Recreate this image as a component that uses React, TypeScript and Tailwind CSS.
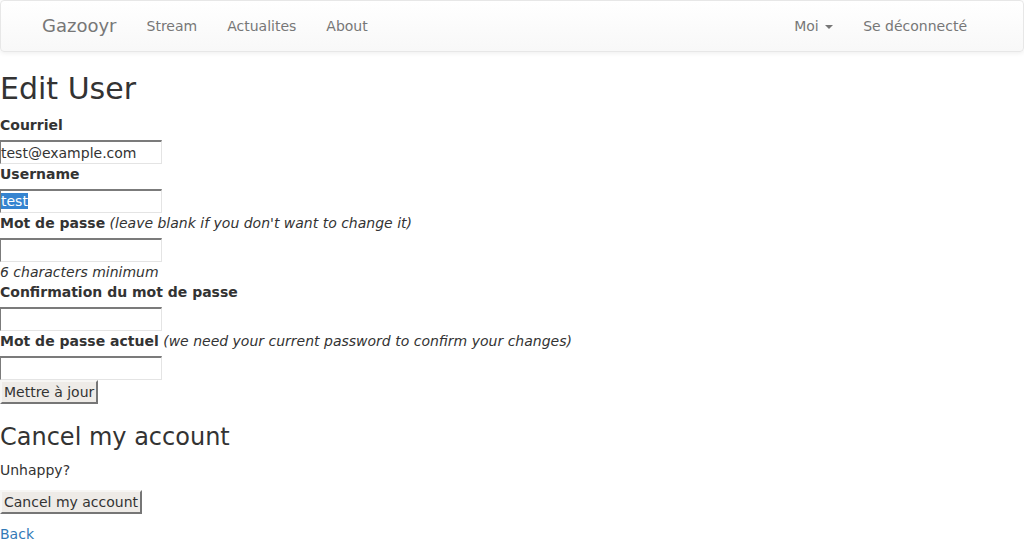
import React from 'react';

const field = 'w-[162px] h-[24px] border-t-2 border-l border-b border-r border-t-[#7b7b7b] border-l-[#7b7b7b] border-b-[#e4e4e4] border-r-[#e4e4e4] bg-white px-0 text-[14px] leading-[20px] text-[#333] outline-none';
const button = 'h-[24px] border-2 border-t-[#f7f6f4] border-l-[#f7f6f4] border-b-[#767676] border-r-[#767676] bg-[#eeebe7] px-[2px] text-[14px] leading-[18px] text-[#333]';

function Navbar() {
  const links = ['Stream', 'Actualites', 'About'];
  return (
    <nav className="h-[52px] mb-[20px] border border-[#e7e7e7] rounded-[4px] bg-gradient-to-b from-white to-[#f8f8f8] shadow-[0_1px_5px_rgba(0,0,0,0.075)]">
      <div className="w-[970px] mx-auto pr-[15px] flex justify-between">
        <div className="flex">
          <a href="#" className="h-[50px] px-[15px] py-[15px] text-[18px] leading-[20px] text-[#777]">Gazooyr</a>
          {links.map((l) => (
            <a key={l} href="#" className="px-[15px] py-[15px] text-[14px] leading-[20px] text-[#777]">{l}</a>
          ))}
        </div>
        <div className="flex">
          <a href="#" className="px-[15px] py-[15px] text-[14px] leading-[20px] text-[#777]">
            Moi{' '}
            <span className="ml-[2px] inline-block align-middle w-0 h-0 border-t-[4px] border-t-[#777] border-x-[4px] border-x-transparent" />
          </a>
          <a href="#" className="px-[15px] py-[15px] text-[14px] leading-[20px] text-[#777]">Se déconnecté</a>
        </div>
      </div>
    </nav>
  );
}

function Label({ text, hint }: { text: string; hint?: string }) {
  return (
    <label className="block h-[20px] mb-[5px] leading-[20px]">
      <span className="font-bold">{text}</span>
      {hint && <i className="font-normal"> {hint}</i>}
    </label>
  );
}

export default function App() {
  return (
    <div className="min-h-[544px] bg-white text-[14px] leading-[20px] text-[#333] font-['DejaVu_Sans',sans-serif]">
      <Navbar />
      <h1 className="text-[30px] leading-[33px] mb-[10px]">Edit User</h1>
      <form onSubmit={(e) => e.preventDefault()}>
        <Label text="Courriel" />
        <input className={`block ${field}`} type="email" defaultValue="test@example.com" />
        <Label text="Username" />
        <div className={field}>
          <span className="bg-[#3584d0] text-white">test</span>
        </div>
        <Label text="Mot de passe" hint="(leave blank if you don't want to change it)" />
        <input className={`block ${field}`} type="password" />
        <i className="block h-[20px]">6 characters minimum</i>
        <Label text="Confirmation du mot de passe" />
        <input className={`block ${field}`} type="password" />
        <Label text="Mot de passe actuel" hint="(we need your current password to confirm your changes)" />
        <input className={`block ${field}`} type="password" />
        <button type="submit" className={`block ${button}`}>Mettre à jour</button>
      </form>
      <h2 className="mt-[20px] mb-[10px] text-[24px] leading-[26px]">Cancel my account</h2>
      <p className="mb-[10px]">Unhappy?</p>
      <button type="button" className={`block ${button}`}>Cancel my account</button>
      <a href="#" className="block mt-[10px] text-[#337ab7]">Back</a>
    </div>
  );
}
